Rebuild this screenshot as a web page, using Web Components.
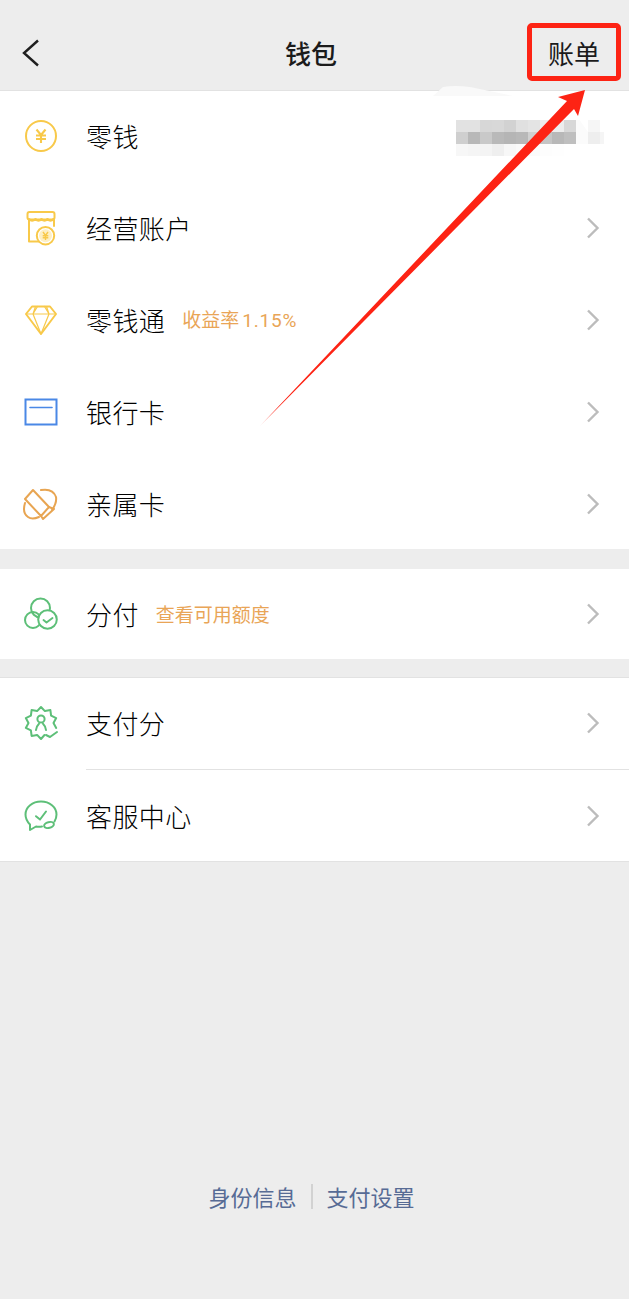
<!DOCTYPE html>
<html lang="zh-CN">
<head>
<meta charset="utf-8">
<title>钱包</title>
<style>
  html, body { margin: 0; padding: 0; background: #ededed; }
  body { font-family: "Noto Sans CJK SC", sans-serif; overflow: hidden; }
  svg[slot] { fill: none; stroke-width: 2; stroke-linecap: round; stroke-linejoin: round; overflow: visible; }
</style>
</head>
<body>
<wallet-page>
  <wallet-header title="钱包" action="账单"></wallet-header>

  <wallet-group>
    <wallet-row label="零钱" plain>
      <svg slot="icon" viewBox="0 0 34 34" stroke="#f8c94a">
        <circle cx="17" cy="17" r="15"/>
        <path d="M12.500 10.500 17 16l4.500-5.500M12 16.500h10M12 20h10M17 16v8" stroke-width="2.100" stroke-linecap="butt"/>
      </svg>
    </wallet-row>
    <wallet-row label="经营账户">
      <svg slot="icon" viewBox="0 0 34 34" stroke="#f8c94a">
        <path d="M5 9v21.500h12"/>
        <path d="M30 9v6"/>
        <path d="M5.500 1h23q2 0 2 2v3.500q0 2-2 2h-23q-2 0-2-2V3q0-2 2-2z"/>
        <path d="M5 8q3 3.500 6.500 0 3 3.500 6 0 3 3.500 6 0 3 3.500 6 0"/>
        <circle cx="21.500" cy="24.700" r="8.700" fill="#fff"/>
        <circle cx="21.500" cy="24.700" r="6.500" fill="#fdefc4" stroke="none"/>
        <path d="M19 21 21.500 24.500 24 21M18.700 24.700h5.600M18.700 26.700h5.600M21.500 24.500v4.500" stroke-width="1.400" stroke-linecap="butt"/>
      </svg>
    </wallet-row>
    <wallet-row label="零钱通" tag="收益率" rate="1.15%">
      <svg slot="icon" viewBox="0 0 34 34" stroke="#f8c94a">
        <path d="M8 3.500h18l6 7.500-15 20-15-20z"/>
        <path d="M2.500 11h29M11.500 3.500 9 11l8 20 8-20-2.500-7.500M9 11l4.500-7.500M25 11l-4.500-7.500" stroke-width="1.200"/>
      </svg>
    </wallet-row>
    <wallet-row label="银行卡">
      <svg slot="icon" viewBox="0 0 34 34" stroke="#4a88e6">
        <path d="M1.500 4.500h31v25h-31z" stroke-linejoin="miter"/>
        <path d="M6 12.500h22" stroke-width="1.600"/>
      </svg>
    </wallet-row>
    <wallet-row label="亲属卡" height="90" pad="0">
      <svg slot="icon" viewBox="0 0 34 34" stroke="#e8a552">
        <path d="M1 12 9 3l16 17-8 9z"/>
        <path d="M17 3Q29 1 32 10 33 16 28 23"/>
        <path d="M25 20l5 2-11 10-2-3"/>
        <path d="M1 16Q-2 26 4 30 8 33 15 30"/>
      </svg>
    </wallet-row>
  </wallet-group>

  <wallet-group gap="20">
    <wallet-row label="分付" tag="查看可用额度" height="90" pad="0">
      <svg slot="icon" viewBox="0 0 34 34" stroke="#5dbf78">
        <circle cx="16.500" cy="11" r="9.500"/>
        <circle cx="9" cy="23" r="8"/>
        <circle cx="23.500" cy="22.500" r="9.300" fill="#fff"/>
        <path d="M19.500 23l3 2.500 6-4.500" stroke-width="1.900"/>
      </svg>
    </wallet-row>
  </wallet-group>

  <wallet-group gap="18" lined>
    <wallet-row label="支付分" divider>
      <svg slot="icon" viewBox="0 0 34 34" stroke="#5dbf78">
        <path transform="translate(0 1)" d="M20.500 28 17 32l-3.900-4.100-5.500 1-.7-5.550-5.100-2.400L4.500 16 1.800 11.050l5.100-2.400.7-5.550 5.500 1L17 0l3.900 4.100 5.500-1 .7 5.550 5.100 2.400L29.500 16l2.700 4.950"/>
        <circle cx="17" cy="13" r="3.600"/>
        <path d="M12 24q.5-4 3-6.300M22 24q-.5-4-3-6.300"/>
        <path d="M22 29l4 2 7-5"/>
      </svg>
    </wallet-row>
    <wallet-row label="客服中心" height="91" pad="0">
      <svg slot="icon" viewBox="0 0 34 34" stroke="#5dbf78">
        <path d="M30.500 22.500C32 20 32.500 18 32.500 15.500 32.500 8 25.500 2.500 17 2.500S1.500 8 1.500 15.500C1.500 19.500 3.500 23 6 25.500V31l6-3.500q3 .5 6 0"/>
        <path d="M12 17.200l4 3.300 6-8"/>
        <ellipse cx="25" cy="26" rx="5" ry="2.800" transform="rotate(-15 25 26)"/>
      </svg>
    </wallet-row>
  </wallet-group>

  <wallet-footer></wallet-footer>
</wallet-page>

<wallet-mosaic></wallet-mosaic>
<wallet-annotation></wallet-annotation>

<script>
class WalletPage extends HTMLElement {
  constructor() {
    super();
    this.attachShadow({ mode: 'open' });
    this.shadowRoot.innerHTML = `
      <style>
        :host { display: flex; flex-direction: column; height: 1299px; background: #ededed; }
      </style>
      <slot></slot>
    `;
  }
}

class WalletHeader extends HTMLElement {
  constructor() {
    super();
    this.attachShadow({ mode: 'open' });
  }

  connectedCallback() {
    this.shadowRoot.innerHTML = `
      <style>
        :host {
          display: grid;
          grid-template-columns: 1fr auto 1fr;
          align-items: center;
          box-sizing: border-box;
          height: 91px;
          padding: 16px 29px 0 22px;
          border-bottom: 1px solid #e2e2e2;
          color: #1b1b1b;
          font-size: 26px;
          line-height: 36px;
        }
        svg { display: block; fill: none; stroke: #1f1f1f; stroke-width: 2.4; }
        .title { font-weight: 500; }
        .action { justify-self: end; }
      </style>
      <svg width="18" height="28" viewBox="0 0 18 28"><path d="M16 1.500 2 14l14 12.500"/></svg>
      <div class="title">${this.getAttribute('title')}</div>
      <div class="action">${this.getAttribute('action')}</div>
    `;
  }
}

class WalletGroup extends HTMLElement {
  constructor() {
    super();
    this.attachShadow({ mode: 'open' });
  }

  connectedCallback() {
    const gap = this.getAttribute('gap') || 0;
    const lined = this.hasAttribute('lined');
    this.shadowRoot.innerHTML = `
      <style>
        :host {
          display: block;
          margin-top: ${gap}px;
          background: #fff;
          ${lined ? 'border-top: 1px solid #e2e2e2; border-bottom: 1px solid #e2e2e2;' : ''}
        }
      </style>
      <slot></slot>
    `;
  }
}

class WalletRow extends HTMLElement {
  constructor() {
    super();
    this.attachShadow({ mode: 'open' });
  }

  connectedCallback() {
    const tag = this.getAttribute('tag');
    const rate = this.getAttribute('rate');
    const height = this.getAttribute('height') || 92;
    const pad = this.getAttribute('pad') || 2;
    const divider = this.hasAttribute('divider');
    const chevron = this.hasAttribute('plain') ? '' : `
      <svg class="chevron" width="14" height="22" viewBox="0 0 14 22"><path d="M2 1.500 11.500 11 2 20.500"/></svg>`;
    this.shadowRoot.innerHTML = `
      <style>
        :host {
          display: flex;
          align-items: center;
          position: relative;
          box-sizing: border-box;
          height: ${height}px;
          padding: 0 29px ${pad}px 24px;
          color: #000;
          font-size: 26px;
        }
        ::slotted(svg) { width: 34px; height: 34px; flex: none; }
        .label { margin-left: 28px; line-height: 36px; font-weight: 300; letter-spacing: .4px; }
        .tag { margin-left: 17px; color: #e9a557; font-size: 19px; line-height: 36px; }
        .rate { font-family: Roboto, sans-serif; letter-spacing: .8px; margin-left: 3px; }
        .chevron { display: block; margin-left: auto; fill: none; stroke: #bcbcbc; stroke-width: 2.4; }
        .divider { position: absolute; left: 86px; right: 0; bottom: 0; height: 1px; background: #e2e2e2; }
      </style>
      <slot name="icon"></slot>
      <span class="label">${this.getAttribute('label')}</span>
      ${tag ? `<span class="tag">${tag}${rate ? `<span class="rate">${rate}</span>` : ''}</span>` : ''}
      ${chevron}
      ${divider ? '<div class="divider"></div>' : ''}
    `;
  }
}

class WalletFooter extends HTMLElement {
  constructor() {
    super();
    this.attachShadow({ mode: 'open' });
    this.shadowRoot.innerHTML = `
      <style>
        :host {
          display: flex;
          justify-content: center;
          align-items: center;
          gap: 14px;
          margin-top: auto;
          padding-bottom: 85px;
          padding-right: 6px;
          color: #576b95;
          font-size: 22px;
          line-height: 36px;
        }
        i { width: 2px; height: 25px; background: #d2d2d2; }
      </style>
      <span>身份信息</span><i></i><span>支付设置</span>
    `;
  }
}

// the blurred balance, drawn cell by cell
const MOSAIC = [
  ['e2', 'e2', 'd7', 'd8', 'd2', 'e0', 'e4', 'ed', 'ed', 'd8', 'fb', 'f6', 'ff'],
  ['cf', 'b8', 'c9', 'b9', 'b5', 'b8', 'd0', 'c5', 'b8', 'bf', 'fb', 'ee', 'f5'],
  ['f7', 'f5', 'f4', 'ef', 'f7', 'fa', 'fb', 'fd', 'fe', 'ff', 'ff', 'ff', 'ff'],
];

class WalletMosaic extends HTMLElement {
  constructor() {
    super();
    this.attachShadow({ mode: 'open' });
    const cells = MOSAIC.flat().map((c) => `<b style="background:#${c}${c}${c}"></b>`).join('');
    this.shadowRoot.innerHTML = `
      <style>
        :host {
          position: absolute;
          left: 456px;
          top: 120px;
          display: grid;
          grid-template-columns: repeat(12, 12px) 4px;
          grid-auto-rows: 12px;
        }
        b:nth-child(12) { clip-path: polygon(0 0, 30% 0, 100% 100%, 0 100%); }
      </style>
      ${cells}
    `;
  }
}

class WalletAnnotation extends HTMLElement {
  constructor() {
    super();
    this.attachShadow({ mode: 'open' });
    this.shadowRoot.innerHTML = `
      <style>
        :host { position: absolute; left: 0; top: 0; width: 629px; height: 1299px; pointer-events: none; }
        svg { display: block; }
        .box {
          position: absolute; left: 527px; top: 23px; width: 94px; height: 58px;
          box-sizing: border-box; border: 5.500px solid #fd2314; border-radius: 5px;
        }
      </style>
      <svg width="629" height="1299" viewBox="0 0 629 1299">
        <defs>
          <linearGradient id="fade" gradientUnits="userSpaceOnUse" x1="259" y1="427" x2="272" y2="413">
            <stop offset="0" stop-color="#fd2314" stop-opacity=".15"/>
            <stop offset="1" stop-color="#fd2314"/>
          </linearGradient>
        </defs>
        <path d="M433 96 443 87Q455 85 470 87L513 96z" fill="#f9f9f9"/>
        <path d="M259 427 567 101 558 97 585 90 578 116 574 109z" fill="url(#fade)"/>
      </svg>
      <div class="box"></div>
    `;
  }
}

customElements.define('wallet-page', WalletPage);
customElements.define('wallet-header', WalletHeader);
customElements.define('wallet-group', WalletGroup);
customElements.define('wallet-row', WalletRow);
customElements.define('wallet-footer', WalletFooter);
customElements.define('wallet-mosaic', WalletMosaic);
customElements.define('wallet-annotation', WalletAnnotation);
</script>
</body>
</html>
